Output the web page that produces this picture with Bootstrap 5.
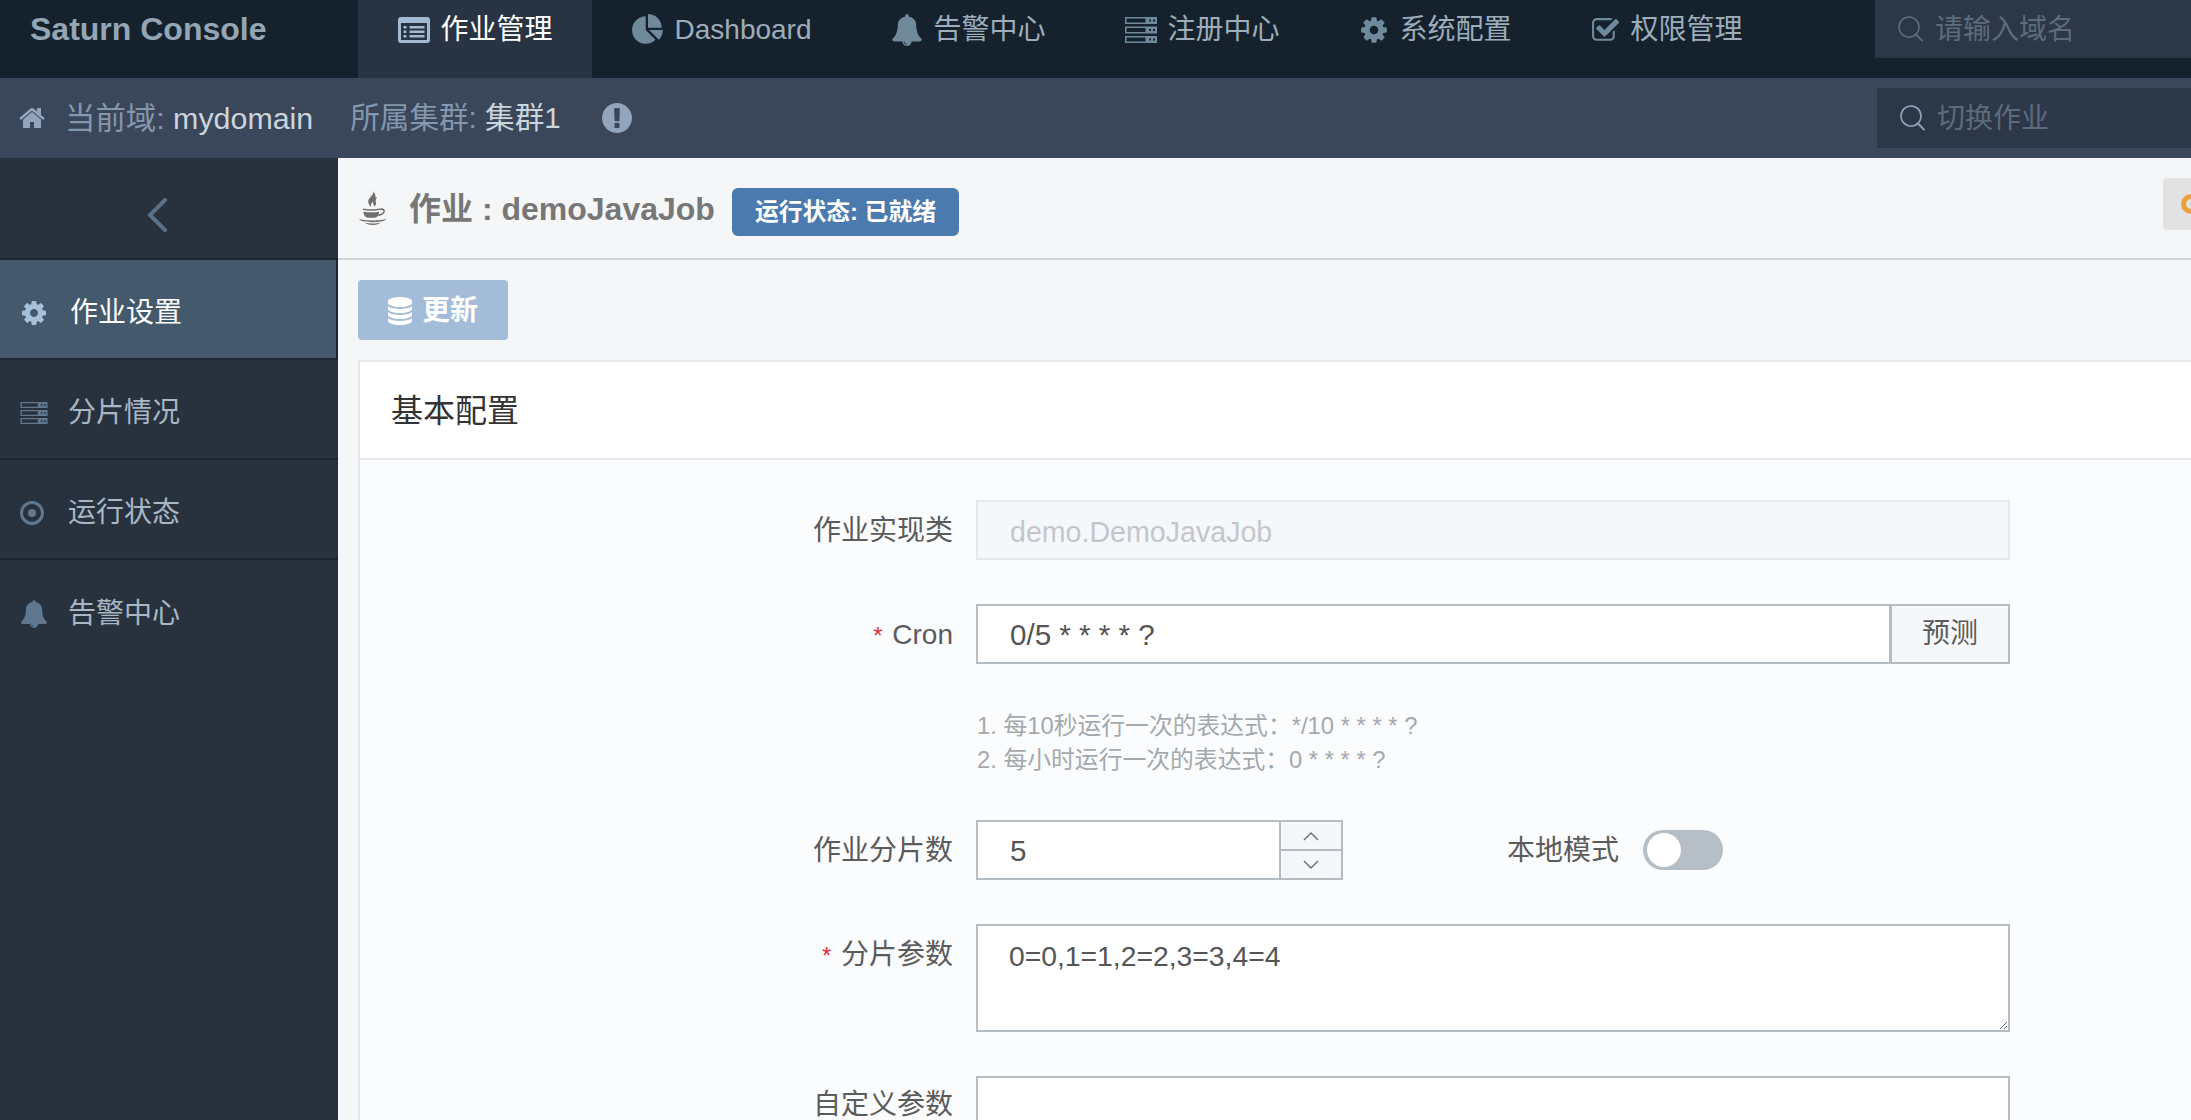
<!doctype html>
<html lang="zh-CN">
<head>
  <meta charset="utf-8" />
  <meta name="viewport" content="width=device-width, initial-scale=1" />
  <title>Saturn Console</title>
  <link href="https://cdn.jsdelivr.net/npm/bootstrap@5.3.0/dist/css/bootstrap.min.css" rel="stylesheet" />
  <style>
    html, body {
      height: 100%;
      overflow: hidden;
    }
    body {
      font-family: "Liberation Sans", "Noto Sans CJK SC", sans-serif;
      font-size: 28px;
      color: #5b5b5b;
      background: #28323f;
    }
    /* top bar */
    .top-bar {
      height: 78px;
      padding: 0;
      background: #15222e;
      flex-wrap: nowrap;
      align-items: flex-start;
    }
    .top-bar .top-brand {
      width: 358px;
      padding: 0 0 0 30px;
      margin: 0;
      font-size: 32px;
      font-weight: 700;
      line-height: 58px;
      color: #94a5b4;
    }
    .top-tabs {
      flex-wrap: nowrap;
    }
    .top-tabs .nav-link {
      display: flex;
      align-items: center;
      gap: 11px;
      height: 78px;
      padding: 0 39.5px 18px;
      font-size: 28px;
      color: #9dadb9;
    }
    .top-tabs .nav-link svg {
      color: #6f8a9a;
      fill: currentColor;
    }
    .top-tabs .nav-link.active {
      background: #283444;
      color: #fff;
    }
    .top-tabs .nav-link.active svg {
      color: #a2bad4;
    }
    .find-box {
      display: flex;
      align-items: center;
      gap: 12px;
      flex-shrink: 0;
      height: 58px;
      padding-left: 23px;
      background: #2c3848;
    }
    .find-box svg {
      flex-shrink: 0;
      color: #5d6b7b;
    }
    .find-box input {
      width: 240px;
      padding: 2px 0 0;
      border: 0;
      outline: 0;
      background: transparent;
      font-size: 28px;
      color: #5d6b7b;
    }
    .find-box input::placeholder {
      color: #5d6b7b;
      opacity: 1;
    }
    .find-top {
      width: 316px;
    }
    .find-sub {
      width: 314px;
      height: 60px;
      margin-top: 10px;
    }
    /* domain bar */
    .sub-bar {
      height: 80px;
      background: #3a465a;
      color: #8497ad;
      font-size: 30.4px;
    }
    .sub-bar .sub-info {
      height: 80px;
      padding-left: 18px;
      line-height: 80px;
    }
    .sub-bar svg {
      color: #93a5bd;
      fill: currentColor;
      flex-shrink: 0;
    }
    .sub-bar .sub-home {
      margin-right: 19px;
    }
    .sub-bar .sub-group {
      margin-left: 37px;
      font-size: 29.6px;
    }
    .sub-bar .sub-warn {
      margin-left: 41px;
    }
    .sub-bar b {
      font-weight: 400;
      color: #cbd5de;
    }
    /* sidebar */
    .page-wrap {
      height: 962px;
      overflow: hidden;
    }
    .side-menu {
      width: 338px;
      flex-shrink: 0;
      background: #28323f;
    }
    .side-toggle {
      height: 102px;
      padding-bottom: 2px;
      border-bottom: 2px solid #1a2634;
      text-align: center;
    }
    .side-toggle svg {
      margin: 40px 0 0 -25px;
      color: #5a7087;
    }
    .side-menu .list-group-item {
      display: flex;
      align-items: center;
      height: 100px;
      padding: 8px 0 0 20px;
      border: 0;
      border-bottom: 2px solid #1a2634;
      border-radius: 0;
      background: transparent;
      color: #a9b6c3;
      font-size: 28px;
    }
    .side-menu .list-group-item svg {
      flex-shrink: 0;
      color: #5f7890;
      fill: currentColor;
    }
    .side-menu .side-ico {
      display: flex;
      width: 48px;
    }
    .side-menu .list-group-item.active {
      border-right: 2px solid #1a2634;
      background: #44596c;
      color: #fff;
    }
    .side-menu .list-group-item.active .side-ico {
      width: 50px;
    }
    .side-menu .list-group-item.active svg {
      color: #a5c0d8;
    }
    /* content */
    .job-pane {
      width: 1920px;
      flex-shrink: 0;
      background: #f5f6f8;
    }
    .job-head {
      height: 102px;
      padding: 0 0 0 21px;
      border-bottom: 2px solid #d0d2d6;
    }
    .job-head svg {
      color: #6f6f6f;
      flex-shrink: 0;
    }
    .job-title {
      margin: 2px 0 0 22px;
      font-size: 32px;
      font-weight: 700;
      line-height: 48px;
      color: #777;
    }
    .job-state {
      margin: 8px 0 0 17px;
      padding: 0 23px;
      font-size: 23.8px;
      font-weight: 700;
      line-height: 48px;
      border-radius: 6px;
      background: #4a7aae;
      color: #fff;
    }
    .job-extra {
      width: 95px;
      height: 52px;
      margin: -8px 0 0 auto;
      padding: 0 0 0 18px;
      border: 0;
      border-radius: 4px;
      background: #e2e2e2;
      text-align: left;
    }
    .job-extra svg {
      display: block;
      color: #e8a03c;
    }
    .btn-save {
      display: inline-flex;
      align-items: center;
      gap: 10px;
      height: 60px;
      margin: 20px 0 20px 20px;
      padding: 2px 30px 0;
      border: 0;
      border-radius: 4px;
      font-size: 28px;
      font-weight: 700;
      color: #fff;
      background: #a3bdd9;
    }
    .btn-save:disabled {
      opacity: 1;
      color: #fff;
      background: #a3bdd9;
    }
    .cfg-card {
      width: 1880px;
      margin-left: 20px;
      border: 2px solid #e6e8ec;
      border-radius: 0;
      background: #fbfcfe;
    }
    .cfg-card .card-header {
      height: 98px;
      padding: 0 0 0 31px;
      border-bottom: 2px solid #e6e8ec;
      border-radius: 0;
      background: #fff;
      font-size: 32px;
      line-height: 98px;
      color: #333;
    }
    .cfg-card .card-body {
      padding: 40px 0 0;
    }
    .cfg-row {
      display: flex;
      align-items: flex-start;
      margin-bottom: 44px;
    }
    .cfg-label {
      width: 593px;
      margin: 0 23px 0 0;
      padding-top: 19px;
      flex-shrink: 0;
      text-align: right;
      font-size: 28px;
      line-height: 24px;
      color: #5b5b5b;
    }
    .cfg-row:last-child .cfg-label {
      padding-top: 17px;
    }
    .cfg-label i {
      font-style: normal;
      font-size: 24px;
      color: #d9303c;
      margin-right: 2px;
    }
    .cfg-field {
      width: 1034px;
      flex-shrink: 0;
    }
    .cfg-card .form-control {
      height: 60px;
      padding: 2px 32px 0;
      border: 2px solid #b5bcc4;
      border-radius: 0;
      font-size: 29.6px;
      color: #555;
      background: #fff;
      box-shadow: none;
    }
    .cfg-card .form-control:disabled {
      padding-top: 4px;
      border-color: #e6e8ee;
      background: #f6f7fb;
      color: #c3c7cc;
      font-size: 28.6px;
      opacity: 1;
    }
    .cfg-card textarea.form-control {
      height: 108px;
      padding: 13px 31px;
      font-size: 28.3px;
      line-height: 34px;
    }
    .btn-addon {
      width: 120px;
      padding: 0;
      border: 2px solid #b5bcc4;
      border-radius: 0;
      background: #f6f7fb;
      font-size: 28px;
      color: #5b5b5b;
    }
    .cfg-help {
      margin: 0 0 43px 617px;
      padding-top: 1px;
      font-size: 23.8px;
      line-height: 34px;
      color: #a5a8ad;
    }
    .num-box {
      width: 367px;
      flex-shrink: 0;
    }
    .spin-col {
      display: flex;
      flex-direction: column;
      width: 64px;
      height: 60px;
      margin-left: -2px;
      flex-shrink: 0;
    }
    .spin-col button {
      display: flex;
      align-items: center;
      justify-content: center;
      height: 31px;
      padding: 0;
      border: 2px solid #b5bcc4;
      border-radius: 0;
      background: #f6f7fb;
      color: #6c727a;
    }
    .spin-col button + button {
      height: 31px;
      margin-top: -2px;
    }
    .local-wrap {
      display: flex;
      align-items: center;
      height: 60px;
      margin-left: 164px;
      gap: 24px;
    }
    .local-wrap label {
      padding-top: 2px;
      font-size: 28px;
      color: #5b5b5b;
    }
    .local-wrap .form-check {
      min-height: 0;
      margin: 0;
      padding: 0;
      display: flex;
    }
    .local-wrap .form-check-input {
      width: 80px;
      height: 40px;
      margin: 0;
      border: 0;
      border-radius: 20px;
      background-color: #b6bec6;
      background-position: 4px center;
      background-size: 34px 34px;
      background-image: url("data:image/svg+xml,%3csvg xmlns='http://www.w3.org/2000/svg' viewBox='-4 -4 8 8'%3e%3ccircle r='4' fill='%23fff'/%3e%3c/svg%3e");
    }
  </style>
</head>
<body>
  <svg class="d-none" xmlns="http://www.w3.org/2000/svg">
    <symbol id="i-cog" viewBox="0 0 1792 1792"><path d="M1152 896q0-106-75-181t-181-75-181 75-75 181 75 181 181 75 181-75 75-181zm512-109v222q0 12-8 23t-20 13l-185 28q-19 54-39 91 35 50 107 138 10 12 10 25t-9 23q-27 37-99 108t-94 71q-12 0-26-9l-138-108q-44 23-91 38-16 136-29 186-7 28-36 28h-222q-14 0-24.500-8.500t-11.500-21.500l-28-184q-49-16-90-37l-141 107q-10 9-25 9-14 0-25-11-126-114-165-168-7-10-7-23 0-12 8-23 15-21 51-66.500t54-70.500q-27-50-41-99l-183-27q-13-2-21-12.500t-8-23.500v-222q0-12 8-23t19-13l186-28q14-46 39-92-40-57-107-138-10-12-10-24 0-10 9-23 26-36 98.500-107.500t94.500-71.500q13 0 26 10l138 107q44-23 91-38 16-136 29-186 7-28 36-28h222q14 0 24.500 8.500t11.500 21.500l28 184q49 16 90 37l142-107q9-9 24-9 13 0 25 10 129 119 165 170 7 8 7 22 0 12-8 23-15 21-51 66.500t-54 70.500q26 50 41 98l183 28q13 2 21 12.500t8 23.500z"/></symbol>
    <symbol id="i-bell" viewBox="0 0 1792 1792"><path d="M912 1696q0-16-16-16-59 0-101.500-42.500t-42.500-101.500q0-16-16-16t-16 16q0 73 51.500 124.500t124.500 51.500q16 0 16-16zm816-288q0 52-38 90t-90 38h-448q0 106-75 181t-181 75-181-75-75-181h-448q-52 0-90-38t-38-90q50-42 91-88t85-119.500 74.500-158.500 50-206 19.500-260q0-152 117-282.500t307-158.500q-8-19-8-39 0-40 28-68t68-28 68 28 28 68q0 20-8 39 190 28 307 158.500t117 282.500q0 139 19.500 260t50 206 74.500 158.500 85 119.500 91 88z"/></symbol>
    <symbol id="i-home" viewBox="0 0 1792 1792"><path d="M1472 992v480q0 26-19 45t-45 19h-384v-384h-256v384h-384q-26 0-45-19t-19-45v-480q0-1 .5-3t.5-3l575-474 575 474q1 2 1 6zm223-69l-62 74q-8 9-21 11h-3q-13 0-21-7l-692-577-692 577q-12 8-24 7-13-2-21-11l-62-74q-8-10-7-23.500t11-21.500l719-599q32-26 76-26t76 26l244 204v-195q0-14 9-23t23-9h192q14 0 23 9t9 23v408l219 182q10 8 11 21.500t-7 23.500z"/></symbol>
    <symbol id="i-warn" viewBox="128 128 1536 1536"><path d="M896 128q209 0 385.500 103t279.500 279.500 103 385.500-103 385.500-279.500 279.500-385.500 103-385.500-103-279.500-279.500-103-385.500 103-385.500 279.500-279.500 385.500-103zm128 1247v-190q0-14-9-23.500t-22-9.500h-192q-13 0-23 10t-10 23v190q0 13 10 23t23 10h192q13 0 22-9.500t9-23.500zm-2-344l18-621q0-12-10-18-10-8-24-8h-220q-14 0-24 8-10 6-10 18l17 621q0 10 10 17.500t24 7.500h185q14 0 23.500-7.500t10.500-17.500z"/></symbol>
    <symbol id="i-db" viewBox="128 128 1536 1536"><path fill="currentColor" d="M896 768q237 0 443-43t325-127v170q0 69-103 128t-280 93.500-385 34.500-385-34.500-280-93.500-103-128v-170q119 84 325 127t443 43zm0 768q237 0 443-43t325-127v170q0 69-103 128t-280 93.500-385 34.500-385-34.500-280-93.500-103-128v-170q119 84 325 127t443 43zm0-384q237 0 443-43t325-127v170q0 69-103 128t-280 93.500-385 34.500-385-34.500-280-93.500-103-128v-170q119 84 325 127t443 43zm0-1152q208 0 385 34.500t280 93.500 103 128v128q0 69-103 128t-280 93.500-385 34.500-385-34.500-280-93.500-103-128v-128q0-69 103-128t280-93.500 385-34.500z"/></symbol>
    <symbol id="i-pie" viewBox="0 0 1792 1792"><path d="M768 890l546 546q-106 108-247.500 168t-298.500 60q-209 0-385.500-103t-279.500-279.500-103-385.500 103-385.500 279.500-279.500 385.500-103v762zm187 6h773q0 157-60 298.500t-168 247.500zm709-128h-768v-768q209 0 385.500 103t279.500 279.500 103 385.500z"/></symbol>
    <symbol id="i-check" viewBox="0 0 1792 1792"><path d="M1472 930v318q0 119-84.500 203.500t-203.500 84.500h-832q-119 0-203.500-84.500t-84.500-203.500v-832q0-119 84.500-203.500t203.500-84.500h832q63 0 117 25 15 7 18 23 3 17-9 29l-49 49q-10 10-23 10-3 0-9-2-23-6-45-6h-832q-66 0-113 47t-47 113v832q0 66 47 113t113 47h832q66 0 113-47t47-113v-254q0-13 9-22l64-64q10-10 23-10 6 0 12 3 20 8 20 29zm231-489l-814 814q-24 24-57 24t-57-24l-430-430q-24-24-24-57t24-57l110-110q24-24 57-24t57 24l263 263 647-647q24-24 57-24t57 24l110 110q24 24 24 57t-24 57z"/></symbol>
    <symbol id="i-list" viewBox="0 0 32 26"><path fill-rule="evenodd" d="M3 0h26a3 3 0 0 1 3 3v20a3 3 0 0 1-3 3H3a3 3 0 0 1-3-3V3a3 3 0 0 1 3-3zM3 6v17h26V6zM5.500 9h3v2.500h-3zm6 0h15v2.500h-15zM5.500 13.500h3V16h-3zm6 0h15V16h-15zM5.500 18h3v2.500h-3zm6 0h15v2.500h-15z"/></symbol>
    <symbol id="i-server" viewBox="0 0 32 26"><path fill-rule="evenodd" d="M0 0h32v7H0zM1.500 1.500v4h19v-4zM24 2.500h2v2h-2zM28 2.500h2v2h-2zM0 9.500h32v7H0zM1.500 11v4h19v-4zM24 12h2v2h-2zM28 12h2v2h-2zM0 19h32v7H0zM1.500 20.500v4h19v-4zM24 21.500h2v2h-2zM28 21.500h2v2h-2z"/></symbol>
    <symbol id="i-dot" viewBox="0 0 24 24"><path fill-rule="evenodd" d="M12 0a12 12 0 1 1 0 24a12 12 0 1 1 0-24zm0 3a9 9 0 1 0 0 18a9 9 0 1 0 0-18zm0 5a4 4 0 1 1 0 8a4 4 0 1 1 0-8z"/></symbol>
    <symbol id="i-find" viewBox="0 0 25 26"><circle cx="11" cy="11" r="10" fill="none" stroke="currentColor" stroke-width="1.6"/><path d="M18 18.500l6.500 6.500" fill="none" stroke="currentColor" stroke-width="1.800"/></symbol>
    <symbol id="i-java" viewBox="0 0 24 30">
      <path fill="currentColor" d="M12 0c1.500 3-3 5.500-4 8-.8 2 .5 4.500 2.500 6.500-.7-2-.5-3.500 2-5.500 2.500-2 2.500-5.500-.500-9zM16 5c-2.500 1.500-4 3-4 5 0 1.500 1 2.500 1 4 2-1.500 2-3 1.500-4-.5-1.500 0-3 1.500-5z"/>
      <path fill="currentColor" d="M3 15.500c4 .8 11 .8 15 0v1.300c-4 .8-11 .8-15 0zM3.500 18.300c4 .7 10 .7 14 0-.2 1.300-.5 2.600-1.300 3.700-.7.900-1.700 1.400-2.700 1.500h-6c-1-.1-2-.6-2.700-1.500-.8-1.100-1.100-2.400-1.300-3.700z"/>
      <path fill="none" stroke="currentColor" stroke-width="1.400" d="M18 16.300c2.500-.8 4.300.3 3.700 2-.6 1.500-2.700 2.700-5 3.200"/>
      <path fill="currentColor" d="M0 24.500c3 2 20 2 23.500 0 .5 1.500-5 3-12 3s-12-1.500-11.500-3zM5 28c4 1 10 1 14-.2-1.500 1.400-4 2.200-7 2.200s-5.500-.7-7-2z"/>
    </symbol>
    <symbol id="i-ring" viewBox="0 0 20 20"><circle cx="10" cy="10" r="7.500" fill="none" stroke="currentColor" stroke-width="5"/></symbol>
  </svg>

  <nav class="navbar top-bar">
    <a class="navbar-brand top-brand" href="#">Saturn Console</a>
    <ul class="nav top-tabs">
      <li class="nav-item"><a class="nav-link active" href="#"><svg width="32" height="26"><use href="#i-list" /></svg>作业管理</a></li>
      <li class="nav-item"><a class="nav-link" href="#"><svg width="32" height="32"><use href="#i-pie" /></svg>Dashboard</a></li>
      <li class="nav-item"><a class="nav-link" href="#"><svg width="32" height="32"><use href="#i-bell" /></svg>告警中心</a></li>
      <li class="nav-item"><a class="nav-link" href="#"><svg width="32" height="26"><use href="#i-server" /></svg>注册中心</a></li>
      <li class="nav-item"><a class="nav-link" href="#"><svg width="30" height="30"><use href="#i-cog" /></svg>系统配置</a></li>
      <li class="nav-item"><a class="nav-link" href="#"><svg width="29" height="29"><use href="#i-check" /></svg>权限管理</a></li>
    </ul>
    <div class="find-box find-top ms-auto">
      <svg width="25" height="26"><use href="#i-find" /></svg>
      <input type="text" placeholder="请输入域名" />
    </div>
  </nav>

  <div class="sub-bar d-flex">
    <div class="sub-info d-flex align-items-center">
      <svg width="28" height="28" class="sub-home"><use href="#i-home" /></svg>
      <span>当前域: <b>mydomain</b></span>
      <span class="sub-group">所属集群: <b>集群1</b></span>
      <svg width="30" height="30" class="sub-warn"><use href="#i-warn" /></svg>
    </div>
    <div class="find-box find-sub ms-auto">
      <svg width="25" height="26"><use href="#i-find" /></svg>
      <input type="text" placeholder="切换作业" />
    </div>
  </div>

  <div class="page-wrap d-flex">
    <aside class="side-menu">
      <div class="side-toggle">
        <svg width="20" height="34" viewBox="0 0 20 34" fill="none" stroke="currentColor" stroke-width="4" stroke-linecap="round"><path d="M18 2L3 17l15 15" /></svg>
      </div>
      <div class="list-group list-group-flush">
        <a href="#" class="list-group-item active"><span class="side-ico"><svg width="28" height="28"><use href="#i-cog" /></svg></span>作业设置</a>
        <a href="#" class="list-group-item"><span class="side-ico"><svg width="28" height="22"><use href="#i-server" /></svg></span>分片情况</a>
        <a href="#" class="list-group-item"><span class="side-ico"><svg width="24" height="24"><use href="#i-dot" /></svg></span>运行状态</a>
        <a href="#" class="list-group-item"><span class="side-ico"><svg width="28" height="28"><use href="#i-bell" /></svg></span>告警中心</a>
      </div>
    </aside>

    <main class="job-pane">
      <div class="job-head d-flex align-items-center">
        <svg width="28" height="34"><use href="#i-java" /></svg>
        <h1 class="job-title">作业 : demoJavaJob</h1>
        <span class="job-state">运行状态: 已就绪</span>
        <button type="button" class="job-extra"><svg width="20" height="20"><use href="#i-ring" /></svg></button>
      </div>

      <button type="button" class="btn btn-save" disabled><svg width="24" height="28"><use href="#i-db" /></svg>更新</button>

      <div class="card cfg-card">
        <div class="card-header">基本配置</div>
        <div class="card-body">
          <div class="cfg-row">
            <label class="cfg-label">作业实现类</label>
            <div class="cfg-field"><input type="text" class="form-control" value="demo.DemoJavaJob" disabled /></div>
          </div>
          <div class="cfg-row">
            <label class="cfg-label"><i>*</i> Cron</label>
            <div class="cfg-field input-group flex-nowrap">
              <input type="text" class="form-control" value="0/5 * * * * ?" />
              <button type="button" class="btn btn-addon">预测</button>
            </div>
          </div>
          <div class="cfg-help">
            1. 每10秒运行一次的表达式：*/10 * * * * ?<br />
            2. 每小时运行一次的表达式：0 * * * * ?
          </div>
          <div class="cfg-row">
            <label class="cfg-label">作业分片数</label>
            <div class="num-box d-flex">
              <input type="text" class="form-control" value="5" />
              <div class="spin-col">
                <button type="button" aria-label="up"><svg width="18" height="10" viewBox="0 0 18 10" fill="none" stroke="currentColor" stroke-width="1.500"><path d="M2 9l7-7 7 7" /></svg></button>
                <button type="button" aria-label="down"><svg width="18" height="10" viewBox="0 0 18 10" fill="none" stroke="currentColor" stroke-width="1.500"><path d="M2 1l7 7 7-7" /></svg></button>
              </div>
            </div>
            <div class="local-wrap">
              <label>本地模式</label>
              <div class="form-check form-switch"><input class="form-check-input" type="checkbox" role="switch" /></div>
            </div>
          </div>
          <div class="cfg-row">
            <label class="cfg-label"><i>*</i> 分片参数</label>
            <div class="cfg-field"><textarea class="form-control">0=0,1=1,2=2,3=3,4=4</textarea></div>
          </div>
          <div class="cfg-row">
            <label class="cfg-label">自定义参数</label>
            <div class="cfg-field"><textarea class="form-control"></textarea></div>
          </div>
        </div>
      </div>
    </main>
  </div>

  <script src="https://cdn.jsdelivr.net/npm/bootstrap@5.3.0/dist/js/bootstrap.bundle.min.js"></script>
</body>
</html>
